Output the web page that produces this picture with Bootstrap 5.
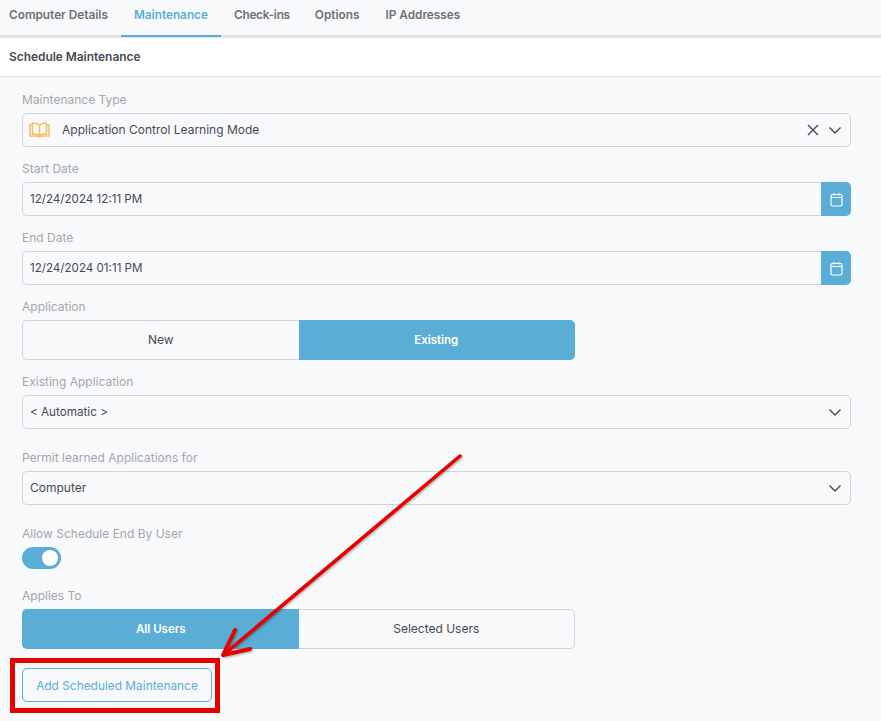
<!DOCTYPE html>
<html lang="en">
<head>
  <meta charset="UTF-8">
  <title>Schedule Maintenance</title>
  <link href="https://cdn.jsdelivr.net/npm/bootstrap@5.3.0/dist/css/bootstrap.min.css" rel="stylesheet">
  <style>
    html, body { height: 100%; }
    body { background: #f8f9fb; font-family: Inter, "Liberation Sans", sans-serif; font-size: 12px; color: #454a52; overflow: hidden; position: relative; }
    .tab-bar { height: 38px; border-bottom: 3px solid #e2e3ea; }
    .tab-bar .nav-link { color: #6b7178; font-weight: 600; font-size: 11.8px; padding: 0 13px; height: 37px; line-height: 30px; border-bottom: 2px solid transparent; }
    .tab-bar .nav-link:first-child { padding-left: 9px; }
    .tab-bar .nav-link.active { color: #5aadd4; border-bottom-color: #5aadd4; }
    .tab-bar .nav-link.tight { letter-spacing: -.25px; padding-right: 12px; }
    .sched-head { background: #fff; height: 39px; padding: 0 9px; line-height: 37px; font-weight: 600; font-size: 11.9px; color: #454a52; border-bottom: 1px solid #dfe1e8; }
    .sched-body { padding: 15px 30px 0 22px; }
    .fld-label { color: #a3a6ab; font-size: 12px; height: 14px; line-height: 16px; margin-bottom: 7px; }
    .fake-select { height: 34px; border: 1px solid #d2d4dc; border-radius: 5px; padding: 0 7px; background: #f8f9fb; }
    .fake-select .txt { flex-grow: 1; }
    .small-val { font-size: 11.7px; padding-top: 2px; }
    .date-input { height: 34px; border: 1px solid #d2d4dc; border-right: 0; border-radius: 5px 0 0 5px; padding: 1px 7px 0; flex-grow: 1; font-size: 11.6px; }
    .cal-btn { width: 30px; height: 34px; background: #5aadd4; border-radius: 0 5px 5px 0; }
    .seg { width: 553px; height: 40px; }
    .seg-item { width: 50%; text-align: center; line-height: 38px; border: 1px solid #d2d4dc; font-size: 12px; }
    .seg-item:first-child { border-radius: 5px 0 0 5px; border-right: 0; }
    .seg-item:last-child { border-radius: 0 5px 5px 0; border-left: 0; }
    .seg-item.on { background: #5aadd4; border-color: #5aadd4; color: #fff; font-weight: 600; font-size: 11.5px; }
    .toggle-track { width: 39px; height: 22px; border-radius: 11px; background: #5aadd4; padding: 3px 3px 3px 20px; }
    .toggle-knob { width: 16px; height: 16px; border-radius: 50%; background: #fff; }
    .add-btn { height: 34px; width: 190px; border: 1px solid #5aadd4; border-radius: 5px; color: #5aadd4; background: transparent; font-size: 11.9px; padding: 1px 0 0; }
    .add-btn:hover { color: #5aadd4; border-color: #5aadd4; }
    .annot { position: absolute; left: 0; top: 0; width: 881px; height: 721px; pointer-events: none; }
    .gap-a { margin-bottom: 14px; }
    .gap-b { margin-bottom: 21px; }
    .gap-c { margin-bottom: 19px; }
    .book-ic { margin-right: 12px; margin-left: -1px; }
    .x-ic { margin-right: 8px; }
    .chev-ic { margin-right: 1px; }
  </style>
</head>
<body>
  <nav class="nav tab-bar">
    <a class="nav-link" href="#">Computer Details</a>
    <a class="nav-link active" href="#">Maintenance</a>
    <a class="nav-link tight" href="#">Check-ins</a>
    <a class="nav-link" href="#">Options</a>
    <a class="nav-link" href="#">IP Addresses</a>
  </nav>
  <div class="sched-head">Schedule Maintenance</div>
  <div class="sched-body">
    <div class="fld-label">Maintenance Type</div>
    <div class="fake-select d-flex align-items-center gap-a">
      <svg width="21" height="16" viewBox="0 0 21 16" fill="none" stroke="#f4bd5e" stroke-width="1.5" class="book-ic">
        <path d="M10.500 3C8.500 1.600 6 1.200 3.500 1.400V12c2.500-.2 5 .2 7 1.500 2-1.300 4.500-1.700 7-1.500V1.400C15 1.200 12.500 1.600 10.500 3zM10.500 3v10.500"/>
        <path d="M3.500 3H1v11h7l2.500 1 2.500-1h7V3h-2.500"/>
      </svg>
      <span class="txt">Application Control Learning Mode</span>
      <svg width="14" height="14" viewBox="0 0 14 14" fill="none" stroke="#454a52" stroke-width="1.400" class="x-ic"><path d="M2 2l10 10M12 2L2 12"/></svg>
      <svg width="14" height="14" viewBox="0 0 14 14" fill="none" stroke="#454a52" stroke-width="1.400" class="chev-ic"><path d="M1.500 4.500L7 10l5.500-5.500"/></svg>
    </div>

    <div class="fld-label">Start Date</div>
    <div class="d-flex gap-a">
      <div class="date-input d-flex align-items-center">12/24/2024 12:11 PM</div>
      <div class="cal-btn d-flex align-items-center justify-content-center">
        <svg width="13" height="15" viewBox="0 0 13 15" fill="none" stroke="#fff" stroke-width="1.200"><rect x="1" y="2.500" width="11" height="11.500" rx="1.500"/><path d="M1 5.500h11M4 1v2.500M9 1v2.500"/></svg>
      </div>
    </div>

    <div class="fld-label">End Date</div>
    <div class="d-flex gap-a">
      <div class="date-input d-flex align-items-center">12/24/2024 01:11 PM</div>
      <div class="cal-btn d-flex align-items-center justify-content-center">
        <svg width="13" height="15" viewBox="0 0 13 15" fill="none" stroke="#fff" stroke-width="1.200"><rect x="1" y="2.500" width="11" height="11.500" rx="1.500"/><path d="M1 5.500h11M4 1v2.500M9 1v2.500"/></svg>
      </div>
    </div>

    <div class="fld-label">Application</div>
    <div class="seg d-flex gap-a">
      <div class="seg-item">New</div>
      <div class="seg-item on">Existing</div>
    </div>

    <div class="fld-label">Existing Application</div>
    <div class="fake-select d-flex align-items-center gap-b">
      <span class="txt small-val">&lt; Automatic &gt;</span>
      <svg width="14" height="14" viewBox="0 0 14 14" fill="none" stroke="#454a52" stroke-width="1.400" class="chev-ic"><path d="M1.500 4.500L7 10l5.500-5.500"/></svg>
    </div>

    <div class="fld-label">Permit learned Applications for</div>
    <div class="fake-select d-flex align-items-center gap-b">
      <span class="txt">Computer</span>
      <svg width="14" height="14" viewBox="0 0 14 14" fill="none" stroke="#454a52" stroke-width="1.400" class="chev-ic"><path d="M1.500 4.500L7 10l5.500-5.500"/></svg>
    </div>

    <div class="fld-label">Allow Schedule End By User</div>
    <div class="toggle-track gap-c"><div class="toggle-knob"></div></div>

    <div class="fld-label">Applies To</div>
    <div class="seg d-flex gap-c">
      <div class="seg-item on">All Users</div>
      <div class="seg-item">Selected Users</div>
    </div>

    <button class="btn add-btn" type="button">Add Scheduled Maintenance</button>
  </div>

  <!-- red annotation drawn on top of the screenshot -->
  <svg class="annot" viewBox="0 0 881 721" fill="none">
    <defs>
      <filter id="sh" x="-10%" y="-10%" width="120%" height="120%"><feDropShadow dx="1" dy="1" stdDeviation="1" flood-color="#000" flood-opacity=".35"/></filter>
    </defs>
    <rect x="12.500" y="660.500" width="205" height="50" stroke="#e60000" stroke-width="5"/>
    <g filter="url(#sh)" stroke="#e60000" stroke-linecap="round" stroke-linejoin="round">
      <path d="M460 456L228 651" stroke-width="3.500"/>
      <path d="M235 630L223 655L250 649" stroke-width="4"/>
    </g>
  </svg>

  <script src="https://cdn.jsdelivr.net/npm/bootstrap@5.3.0/dist/js/bootstrap.bundle.min.js"></script>
</body>
</html>
